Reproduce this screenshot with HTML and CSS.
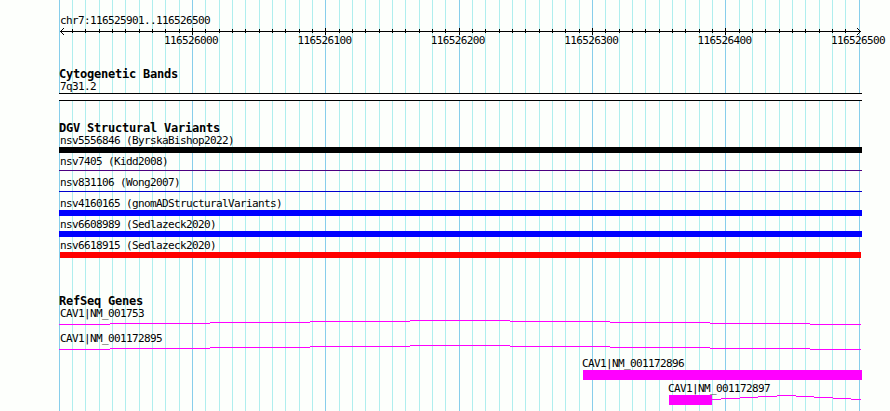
FILE: index.html
```
<!DOCTYPE html>
<html lang="en">

<head>
    <meta charset="UTF-8">
    <title>chr7:116525901..116526500</title>
    <link rel="stylesheet" href="styles.css">
</head>

<body>
    <div class="browser">
        <!-- ruler -->
        <div class="ruler">
            <div class="label">chr7:116525901..116526500</div>
            <svg class="scale" width="803" height="9" shape-rendering="crispEdges">
                <defs>
                    <pattern id="minor" width="40" height="9" patternUnits="userSpaceOnUse">
                        <path d="M0 2h1v4h-1zM13 2h1v4h-1zM26 2h1v4h-1z" />
                    </pattern>
                    <pattern id="major" width="400" height="9" patternUnits="userSpaceOnUse">
                        <path d="M0 1h1v7h-1zM133 1h1v7h-1zM266 1h1v7h-1z" />
                    </pattern>
                </defs>
                <rect x="1" y="4" width="801" height="1" />
                <rect x="10" width="785" height="9" fill="url(#minor)" />
                <rect x="10" width="785" height="9" fill="url(#major)" />
                <path d="M1 4h1v1h-1zM2 3h1v1h-1zM3 2h1v1h-1zM4 1h1v1h-1zM2 5h1v1h-1zM3 6h1v1h-1zM4 7h1v1h-1z" />
                <path d="M801 4h1v1h-1zM800 3h1v1h-1zM799 2h1v1h-1zM798 1h1v1h-1zM800 5h1v1h-1zM799 6h1v1h-1zM798 7h1v1h-1z" />
            </svg>
            <div class="numbers">
                <span>116526000</span>
                <span>116526100</span>
                <span>116526200</span>
                <span>116526300</span>
                <span>116526400</span>
                <span>116526500</span>
            </div>
        </div>

        <!-- cytoband -->
        <div class="track cyto">
            <h2>Cytogenetic Bands</h2>
            <div class="label">7q31.2</div>
            <div class="band"></div>
        </div>

        <!-- DGV -->
        <div class="track dgv">
            <h2>DGV Structural Variants</h2>
            <div class="row">
                <div class="label">nsv5556846 (ByrskaBishop2022)</div>
                <div class="bar black"></div>
            </div>
            <div class="row">
                <div class="label">nsv7405 (Kidd2008)</div>
                <div class="line purple"></div>
            </div>
            <div class="row">
                <div class="label">nsv831106 (Wong2007)</div>
                <div class="line navy"></div>
            </div>
            <div class="row">
                <div class="label">nsv4160165 (gnomADStructuralVariants)</div>
                <div class="bar blue"></div>
            </div>
            <div class="row">
                <div class="label">nsv6608989 (Sedlazeck2020)</div>
                <div class="bar blue"></div>
            </div>
            <div class="row">
                <div class="label">nsv6618915 (Sedlazeck2020)</div>
                <div class="bar red"></div>
            </div>
        </div>

        <!-- genes -->
        <div class="track genes">
            <h2>RefSeq Genes</h2>
            <div class="gene">
                <div class="label">CAV1|NM_001753</div>
                <svg class="intron" width="803" height="10" shape-rendering="crispEdges">
                    <path d="M0 4.5H51M51 3.5H151M151 2.5H251M251 1.5H351M351 .5H451M451 1.5H551M551 2.5H651M651 3.5H751M751 4.5H802" />
                </svg>
            </div>
            <div class="gene">
                <div class="label">CAV1|NM_001172895</div>
                <svg class="intron" width="803" height="10" shape-rendering="crispEdges">
                    <path d="M0 4.5H51M51 3.5H151M151 2.5H251M251 1.5H351M351 .5H451M451 1.5H551M551 2.5H651M651 3.5H751M751 4.5H802" />
                </svg>
            </div>
            <div class="gene gene-2896">
                <div class="label">CAV1|NM_001172896</div>
                <div class="exon"></div>
            </div>
            <div class="gene gene-2897">
                <div class="label">CAV1|NM_001172897</div>
                <div class="parts">
                    <div class="exon"></div>
                    <svg class="intron" width="150" height="10" shape-rendering="crispEdges">
                        <path d="M0 4.5H9M9 3.5H28M28 2.5H46M46 1.5H65M65 .5H84M84 1.5H102M102 2.5H121M121 3.5H139M139 4.5H149" />
                    </svg>
                </div>
            </div>
        </div>
    </div>
</body>

</html>
```
FILE: styles.css
```
* {
    margin: 0;
    padding: 0;
    box-sizing: border-box;
}

body {
    background-color: #fdfffc;
    color: #000;
    font-family: "DejaVu Sans Mono", "Liberation Mono", monospace;
    overflow: hidden;
}

svg {
    display: block;
}

/* grid: a line every 10 bases, a darker one every 100 */
.browser {
    width: 803px;
    height: 411px;
    margin-left: 59px;
    padding-top: 14px;
    background-image:
        linear-gradient(90deg, #87ceeb 1px, transparent 1px, transparent 133px, #87ceeb 133px, #87ceeb 134px, transparent 134px, transparent 266px, #87ceeb 266px, #87ceeb 267px, transparent 267px),
        linear-gradient(90deg, #afeeee 1px, transparent 1px, transparent 13px, #afeeee 13px, #afeeee 14px, transparent 14px, transparent 26px, #afeeee 26px, #afeeee 27px, transparent 27px);
    background-size: 400px 100%, 40px 100%;
}

.label {
    height: 13px;
    padding-left: 1px;
    font-size: 11px;
    line-height: 13px;
    letter-spacing: -0.62px;
    white-space: nowrap;
}

h2 {
    height: 12px;
    font-size: 12px;
    line-height: 12px;
    letter-spacing: -0.22px;
    white-space: nowrap;
}

/* ruler */
.ruler {
    height: 54px;
}

.numbers {
    display: flex;
    width: 827px;
    padding-left: 105px;
    justify-content: space-between;
    font-size: 11px;
    line-height: 11px;
    letter-spacing: -0.62px;
}

.numbers span {
    width: 55px;
}

.scale {
    margin-bottom: -1px;
}

/* cytoband */
.cyto {
    height: 54px;
}

.band {
    height: 8px;
    background-color: #fff;
    border-top: 1px solid #000;
    border-bottom: 1px solid #000;
}

/* variants */
.dgv {
    height: 173px;
}

.row {
    height: 21px;
}

.bar {
    height: 6px;
}

.line {
    height: 1px;
    margin-top: 2px;
}

.black {
    background-color: #000;
}

.purple {
    background-color: #4b0082;
}

.navy {
    background-color: #0000cd;
}

.blue {
    background-color: #00f;
}

.red {
    margin: 0 1px;
    background-color: #f00;
}

/* genes */
.gene {
    height: 25px;
}

.intron {
    fill: none;
    stroke: #f0f;
}

.exon {
    height: 10px;
    background-color: #f0f;
}

.gene-2896 {
    padding-left: 524px;
}

.gene-2897 {
    padding-left: 610px;
}

.gene-2896 .label,
.gene-2897 .label {
    padding-left: 0;
    text-indent: -1px;
}

.parts {
    display: flex;
}

.parts .exon {
    width: 43px;
}
```
